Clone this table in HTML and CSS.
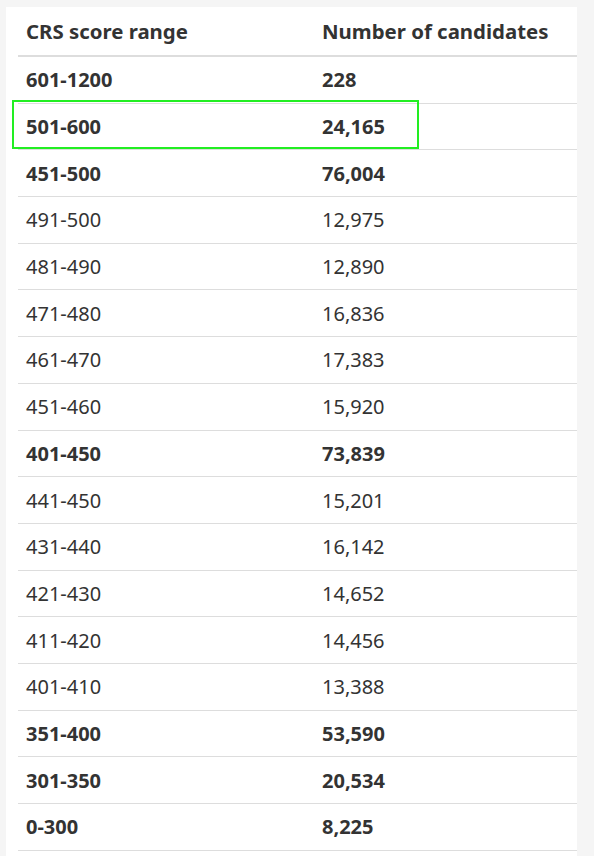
FILE: index.html
```html
<!DOCTYPE html>
<html>
<head>
<meta charset="utf-8">
<link rel="stylesheet" href="styles.css">
</head>
<body>
<div class="panel">
  <table class="crs">
    <thead>
      <tr><th class="c1">CRS score range</th><th>Number of candidates</th></tr>
    </thead>
    <tbody>
      <tr class="b"><td>601-1200</td><td>228</td></tr>
      <tr class="b"><td>501-600</td><td>24,165</td></tr>
      <tr class="b"><td>451-500</td><td>76,004</td></tr>
      <tr><td>491-500</td><td>12,975</td></tr>
      <tr><td>481-490</td><td>12,890</td></tr>
      <tr><td>471-480</td><td>16,836</td></tr>
      <tr><td>461-470</td><td>17,383</td></tr>
      <tr><td>451-460</td><td>15,920</td></tr>
      <tr class="b"><td>401-450</td><td>73,839</td></tr>
      <tr><td>441-450</td><td>15,201</td></tr>
      <tr><td>431-440</td><td>16,142</td></tr>
      <tr><td>421-430</td><td>14,652</td></tr>
      <tr><td>411-420</td><td>14,456</td></tr>
      <tr><td>401-410</td><td>13,388</td></tr>
      <tr class="b"><td>351-400</td><td>53,590</td></tr>
      <tr class="b"><td>301-350</td><td>20,534</td></tr>
      <tr class="b"><td>0-300</td><td>8,225</td></tr>
    </tbody>
  </table>
  <div class="highlight"></div>
</div>
</body>
</html>
```
FILE: styles.css
```css
html, body {
  margin: 0;
  padding: 0;
  background: #f5f5f5;
  font-family: "Noto Sans", "Open Sans", sans-serif;
  color: #333;
}
.panel {
  position: relative;
  background: #fff;
  margin: 7px 17px 0 6px;
  padding-left: 12px;
  height: 849px;
}
.crs {
  width: 100%;
  border-collapse: collapse;
  font-size: 20px;
  line-height: 27px;
}
.crs th {
  text-align: left;
  font-weight: 700;
  font-size: 20.4px;
  padding: 11px 8px 10px;
  border-bottom: 2px solid #dddddd;
}
.crs th.c1 {
  width: 280px;
}
.crs td {
  padding: 9.35px 8px 9.35px;
  border-bottom: 1px solid #dddddd;
  font-weight: 400;
}
.crs tr.b td {
  font-weight: 700;
}
.highlight {
  position: absolute;
  left: 6px;
  top: 93px;
  width: 403px;
  height: 45px;
  border: 2px solid #22ee22;
}
```
